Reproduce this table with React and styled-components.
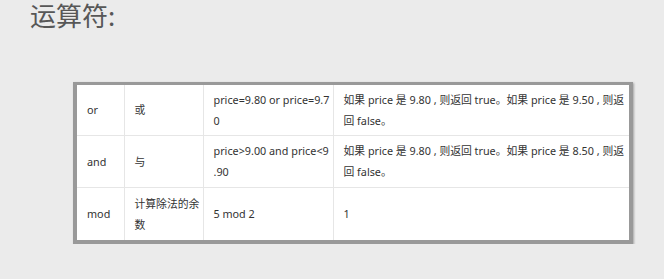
import React from "react";
import styled, { createGlobalStyle } from "styled-components";

const GlobalStyle = createGlobalStyle`
  html, body {
    margin: 0;
    padding: 0;
    background: #ebebeb;
  }
`;

const Page = styled.div`
  padding: 0 0 0 30px;
  font-family: "Noto Sans CJK SC", "Noto Sans", sans-serif;
`;

const Title = styled.h2`
  margin: -3px 0 0;
  font-size: 26px;
  font-weight: 400;
  line-height: 36px;
  color: #575757;
`;

const Frame = styled.div`
  width: 552px;
  margin: 49px 0 0 43px;
  border-style: solid;
  border-color: #999;
  border-width: 3px 4px 4px 4px;
  box-shadow: 1px 1px 2px rgba(0, 0, 0, 0.3);
  background: #fff;
`;

const Table = styled.table`
  width: 552px;
  border-collapse: collapse;
  table-layout: fixed;
  font-family: "Noto Sans", "Noto Sans CJK SC", sans-serif;
  font-size: 10.8px;
  line-height: 21px;
  color: #333;
`;

const Cell = styled.td`
  width: ${(p) => p.$w}px;
  height: ${(p) => p.$h || 50}px;
  padding: 0 ${(p) => p.$pr ?? 8}px 0 10px;
  border: 1px solid #e6e6e6;
  vertical-align: middle;
  word-break: break-all;
  box-sizing: border-box;

  tr:first-child > & {
    border-top: none;
  }
  tr:last-child > & {
    border-bottom: none;
  }
  &:first-child {
    border-left: none;
  }
  &:last-child {
    border-right: none;
  }
`;

const rows = [
  {
    op: "or",
    desc: "或",
    example: "price=9.80 or price=9.70",
    result: "如果 price 是 9.80 , 则返回 true。如果 price 是 9.50 , 则返回 false。",
    h: 50,
  },
  {
    op: "and",
    desc: "与",
    // break allowed before the decimal point, as in the original sheet
    example: (
      <>
        price&gt;9.00 and price&lt;9<wbr />.90
      </>
    ),
    result: "如果 price 是 9.80 , 则返回 true。如果 price 是 8.50 , 则返回 false。",
    h: 52,
  },
  {
    op: "mod",
    desc: "计算除法的余数",
    example: "5 mod 2",
    result: "1",
    h: 53,
  },
];

export default function App() {
  return (
    <>
      <GlobalStyle />
      <Page>
        <Title>运算符:</Title>
        <Frame>
          <Table>
            <tbody>
              {rows.map((r) => (
                <tr key={r.op}>
                  <Cell $w={47} $h={r.h}>{r.op}</Cell>
                  <Cell $w={79} $h={r.h} $pr={2}>{r.desc}</Cell>
                  <Cell $w={130} $h={r.h} $pr={1.5}>{r.example}</Cell>
                  <Cell $w={296} $h={r.h} $pr={2}>{r.result}</Cell>
                </tr>
              ))}
            </tbody>
          </Table>
        </Frame>
      </Page>
    </>
  );
}
